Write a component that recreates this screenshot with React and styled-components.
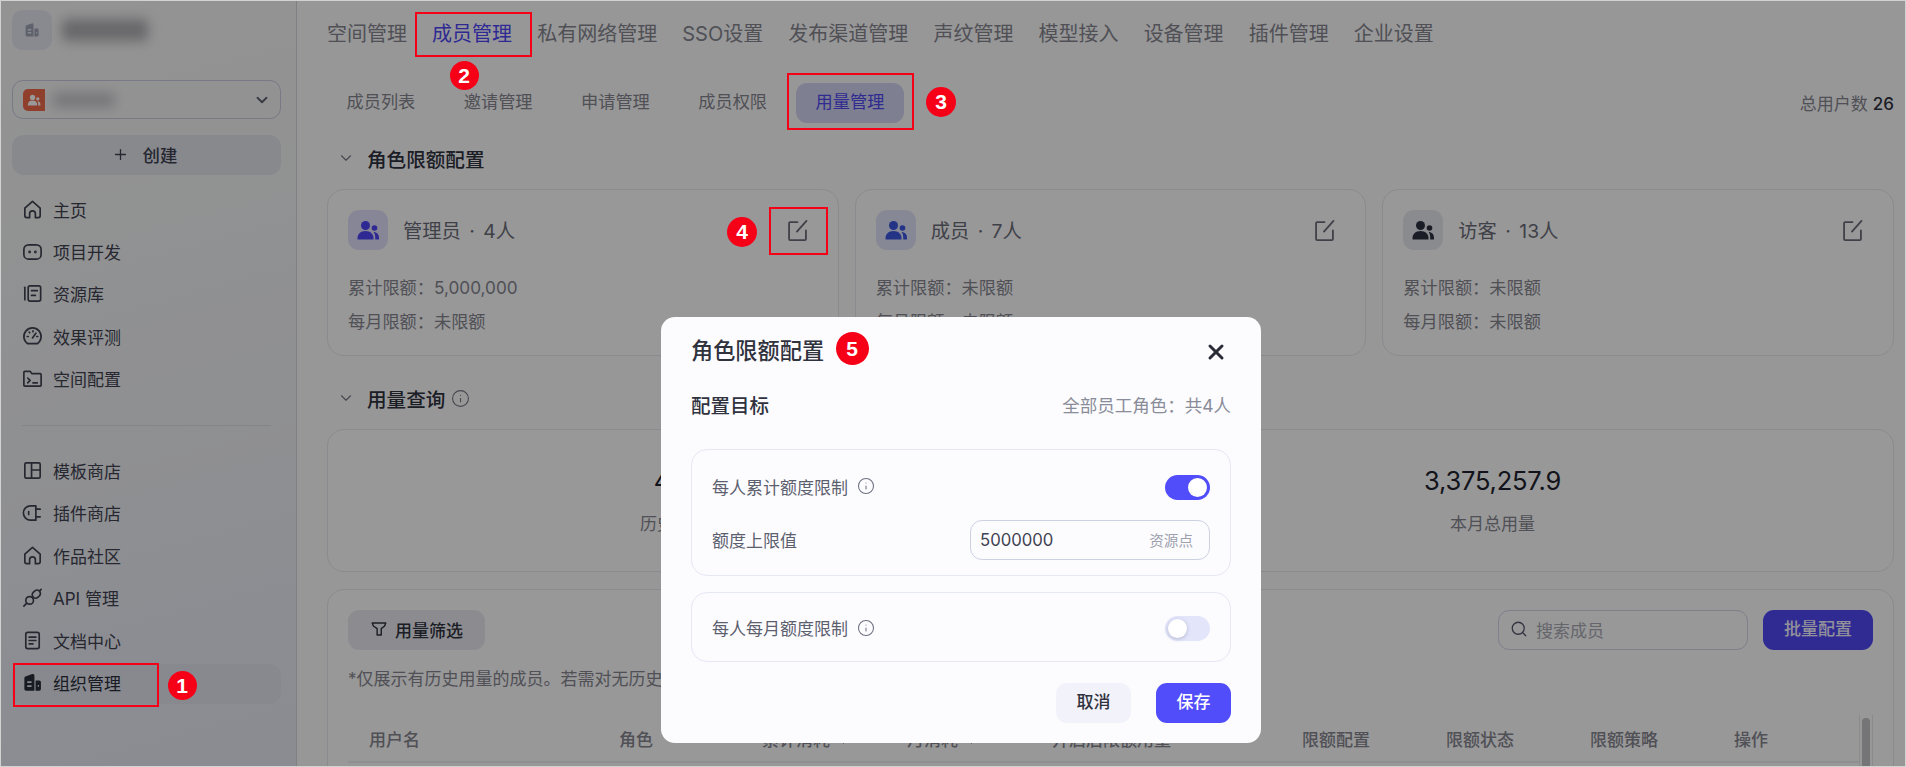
import React from "react";
import styled, { createGlobalStyle } from "styled-components";
import { ChevronDown, Info, Plus, Search, X } from "lucide-react";

const GlobalStyle = createGlobalStyle`
    html, body{
        margin: 0;
        padding: 0;
    }
    body{
        font-family: Inter, "Noto Sans CJK SC", sans-serif;
        color: #404250;
    }
    *{
        box-sizing: border-box;
    }
`;

const Frame = styled.div`
    position: relative;
    display: flex;
    width: 1906px;
    height: 767px;
    overflow: hidden;
    border: 1px solid #d2d2d2;
    background-color: #fcfcfd;
`;

/* sidebar */
const Sidebar = styled.aside`
    flex: 0 0 296px;
    padding: 9px 15px 0 11px;
    border-right: 1px solid #d5d6dc;
    background: linear-gradient(165deg, #f6f6f6 0%, #eff0f3 55%, #e6e9f4 100%);
`;

const OrgRow = styled.div`
    display: flex;
    align-items: center;
    gap: 10px;
    height: 40px;
`;

const LogoTile = styled.div`
    display: flex;
    align-items: center;
    justify-content: center;
    width: 40px;
    height: 40px;
    border-radius: 10px;
    background-color: #e4e6ee;
    color: #9ea3b5;
`;

const Blur = styled.div`
    width: ${p => p.$w}px;
    height: ${p => p.$h}px;
    border-radius: 4px;
    background-color: ${p => p.$c};
    filter: blur(6px);
`;

const WorkspaceSelect = styled.div`
    display: flex;
    align-items: center;
    height: 39px;
    margin-top: 30px;
    padding: 0 9px 0 10px;
    border: 1px solid #c8cade;
    border-radius: 11px;
    color: #5c5e70;
    > svg{
        margin-left: auto;
    }
`;

const WorkspaceIcon = styled.div`
    display: flex;
    align-items: center;
    justify-content: center;
    width: 22px;
    height: 22px;
    margin-right: 8px;
    border-radius: 5px 0 0 5px;
    background-color: #ee6a4a;
    color: #fff;
`;

const CreateButton = styled.button`
    display: flex;
    align-items: center;
    justify-content: center;
    gap: 14px;
    width: 100%;
    height: 40px;
    margin-top: 16px;
    padding: 0 4px 2px 0;
    border: none;
    border-radius: 12px;
    background-color: #e2e4ec;
    color: #404250;
    font: 500 17.4px Inter, "Noto Sans CJK SC", sans-serif;
`;

const NavList = styled.nav`
    display: flex;
    flex-direction: column;
    gap: 2.4px;
    margin-top: ${p => p.$top}px;
`;

const NavItem = styled.div`
    display: flex;
    align-items: center;
    gap: 9px;
    height: 40px;
    padding: 0 0 2px 9px;
    border-radius: 12px;
    font-size: 17px;
    background-color: ${p => p.$active ? "#e1e4ee" : "transparent"};
    color: ${p => p.$active ? "#2b2d3a" : "#404250"};
    svg{
        flex: none;
    }
`;

const NavDivider = styled.div`
    height: 1px;
    margin: 25px 10px 0 10px;
    background-color: #dcdee6;
`;

/* main column */
const Main = styled.main`
    flex: 1;
    min-width: 0;
    padding: 0 11px 0 30px;
`;

const TopTabs = styled.div`
    display: flex;
    align-items: center;
    gap: 25.1px;
    height: 65px;
    padding-bottom: 2px;
`;

const TopTab = styled.div`
    font-size: 20px;
    color: ${p => p.$active ? "#4f46f5" : "#85868f"};
`;

const SubBar = styled.div`
    display: flex;
    align-items: center;
    gap: 9.5px;
    height: 40px;
    margin-top: 17px;
`;

const SubTab = styled.div`
    padding: 0 19.5px 2px 19.5px;
    line-height: 38px;
    border-radius: 11px;
    font-size: 17.2px;
    background-color: ${p => p.$active ? "#d2d4f1" : "transparent"};
    color: ${p => p.$active ? "#5148f2" : "#85868f"};
`;

const UserTotal = styled.div`
    margin-left: auto;
    padding-bottom: 2px;
    font-size: 17px;
    color: #85868f;
    b{
        margin-left: 5px;
        font-weight: 500;
        color: #30323e;
    }
`;

const SectionHead = styled.div`
    display: flex;
    align-items: center;
    height: 28px;
    margin-top: ${p => p.$top}px;
    margin-bottom: 16px;
    padding: 0 0 2px 10px;
    color: #30323e;
    font-size: 19.6px;
    font-weight: 500;
    > svg:first-child{
        margin-right: 12px;
        color: #777985;
    }
    > svg:last-child:not(:first-child){
        margin-left: 6px;
        color: #777985;
    }
`;

const RoleGrid = styled.div`
    display: grid;
    grid-template-columns: repeat(3, 1fr);
    gap: 16px;
`;

const Card = styled.div`
    border: 1px solid #e7e8ee;
    border-radius: 17px;
    background-color: #fdfdfe;
`;

const RoleCard = styled(Card)`
    height: 167px;
    padding: 20px 20px 0 20px;
`;

const RoleHead = styled.div`
    display: flex;
    align-items: center;
    gap: 15px;
    height: 40px;
    color: #6b6c78;
    font-size: 19.3px;
    word-spacing: 3px;
    > svg{
        margin-left: auto;
        margin-right: 7px;
        color: #6b6c78;
    }
`;

const RoleTile = styled.div`
    display: flex;
    align-items: center;
    justify-content: center;
    width: 40px;
    height: 40px;
    border-radius: 11px;
    background-color: ${p => p.$guest ? "#e7e8ee" : p.$blue ? "#dfe3f9" : "#dfe0fa"};
    color: ${p => p.$guest ? "#2c3040" : p.$blue ? "#3b55e0" : "#4f46f5"};
`;

const RoleLines = styled.div`
    margin-top: 21px;
    color: #85868f;
    font-size: 17.2px;
    line-height: 34px;
`;

const SummaryCard = styled(Card)`
    display: grid;
    grid-template-columns: repeat(3, 405px);
    align-content: center;
    height: 143px;
    padding-left: 152px;
`;

const Summary = styled.div`
    text-align: center;
`;

const SummaryValue = styled.div`
    color: #20222e;
    font-size: 25.5px;
    font-weight: 400;
    line-height: 30px;
    letter-spacing: -0.2px;
`;

const SummaryLabel = styled.div`
    margin-top: 16px;
    color: #85868f;
    font-size: 17px;
    line-height: 24px;
`;

const TableCard = styled(Card)`
    height: 300px;
    margin-top: 17px;
    padding: 20px 20px 0 20px;
`;

const FilterBar = styled.div`
    display: flex;
    align-items: center;
    height: 40px;
`;

const FilterButton = styled.div`
    display: flex;
    align-items: center;
    gap: 7px;
    height: 40px;
    padding: 0 22px 2px 22px;
    border-radius: 11px;
    background-color: #e9eaf0;
    color: #30323e;
    font-size: 17px;
    font-weight: 500;
`;

const SearchBox = styled.div`
    display: flex;
    align-items: center;
    gap: 8px;
    width: 250px;
    height: 40px;
    margin-left: auto;
    padding: 0 11px 2px 11px;
    border: 1px solid #d3d5e6;
    border-radius: 11px;
    color: #a8a9b4;
    font-size: 17px;
    svg{
        color: #55576a;
    }
`;

const BatchButton = styled.div`
    width: 110px;
    height: 40px;
    margin-left: 15px;
    border-radius: 11px;
    background-color: #5047f6;
    color: #f4f3ff;
    font-size: 17px;
    font-weight: 500;
    line-height: 38px;
    text-align: center;
`;

const FilterNote = styled.div`
    margin-top: 17px;
    color: #85868f;
    font-size: 17px;
    line-height: 24px;
    white-space: nowrap;
`;

const TableWrap = styled.div`
    display: flex;
    height: 80px;
    margin-top: 24px;
`;

const TableHead = styled.div`
    flex: 1;
    display: grid;
    grid-template-columns: 250px 143px 145px 145px 250px 144px 144px 144px 1fr;
    align-items: center;
    height: 48px;
    padding-left: 21px;
    border-bottom: 2px solid #eeeff3;
    color: #85868f;
    font-size: 17px;
    font-weight: 500;
`;

const HeadCell = styled.div`
    display: flex;
    align-items: center;
    gap: 9px;
`;

const ScrollTrack = styled.div`
    flex: 0 0 14px;
    padding: 3px 2px;
    border-left: 1px solid #e8e8ea;
    border-right: 1px solid #e8e8ea;
`;

const ScrollThumb = styled.div`
    height: 80px;
    border-radius: 4px;
    background-color: #c4c4c6;
`;

/* overlay and dialog */
const Overlay = styled.div`
    position: absolute;
    inset: 0;
    background-color: rgba(0, 0, 0, 0.4);
`;

const Modal = styled.section`
    position: absolute;
    left: 660px;
    top: 316px;
    width: 600px;
    height: 426px;
    padding: 20px 30px 0 30px;
    border-radius: 14px;
    background-color: #fcfcff;
`;

const ModalHead = styled.div`
    display: flex;
    align-items: center;
    justify-content: space-between;
    height: 28px;
    color: #30323e;
    font-size: 22.2px;
    font-weight: 500;
    line-height: 28px;
    svg{
        margin-right: 3px;
        margin-top: 2px;
        color: #2a2c38;
    }
`;

const TargetRow = styled.div`
    display: flex;
    align-items: center;
    justify-content: space-between;
    height: 28px;
    margin-top: 25px;
    color: #30323e;
    font-size: 19.5px;
    font-weight: 500;
    span{
        color: #8a8c99;
        font-size: 17.5px;
        font-weight: 400;
    }
`;

const LimitPanel = styled.div`
    margin-top: ${p => p.$top}px;
    padding: 4px 20px ${p => p.$bottom}px 20px;
    border: 1px solid #e6e8f3;
    border-radius: 16px;
`;

const LimitRow = styled.div`
    display: flex;
    align-items: center;
    justify-content: space-between;
    height: ${p => p.$h}px;
    color: #5c5f6e;
    font-size: 17px;
`;

const LimitLabel = styled.div`
    display: flex;
    align-items: center;
    gap: 9px;
    padding-bottom: 2px;
    svg{
        color: #6d7080;
    }
`;

const Switch = styled.div`
    display: flex;
    align-items: center;
    justify-content: ${p => p.$on ? "flex-end" : "flex-start"};
    width: 45px;
    height: 25px;
    padding: 0 3px;
    border-radius: 13px;
    background-color: ${p => p.$on ? "#524dfb" : "#e3e6fb"};
    i{
        width: 19px;
        height: 19px;
        border-radius: 50%;
        background-color: #fff;
        box-shadow: ${p => p.$on ? "none" : "0 1px 4px rgba(60, 64, 100, 0.3)"};
    }
`;

const QuotaInput = styled.div`
    display: flex;
    align-items: center;
    justify-content: space-between;
    width: 240px;
    height: 40px;
    padding: 0 16px 0 9px;
    border: 1px solid #cdd1e2;
    border-radius: 12px;
    color: #3f4250;
    font-size: 16.7px;
    span{
        padding-bottom: 2px;
        color: #9da0ad;
        font-size: 14.6px;
    }
`;

const ModalFooter = styled.div`
    display: flex;
    justify-content: flex-end;
    gap: 25px;
    margin-top: 21px;
`;

const ModalButton = styled.div`
    width: 75px;
    height: 40px;
    border-radius: 11px;
    background-color: ${p => p.$primary ? "#524dfb" : "#f2f3fa"};
    color: ${p => p.$primary ? "#fff" : "#30323e"};
    font-size: 17px;
    font-weight: 500;
    line-height: 38px;
    text-align: center;
`;

/* red tutorial marks lying over the page */
const MarkBox = styled.div`
    position: absolute;
    left: ${p => p.$x}px;
    top: ${p => p.$y}px;
    width: ${p => p.$w}px;
    height: ${p => p.$h}px;
    border: 2px solid #f60018;
`;

const MarkBadge = styled.div`
    position: absolute;
    left: ${p => p.$x - p.$d / 2}px;
    top: ${p => p.$y - p.$d / 2}px;
    width: ${p => p.$d}px;
    height: ${p => p.$d}px;
    border-radius: 50%;
    background-color: #f60018;
    color: #fff;
    font: 700 21px/${p => p.$d}px "Liberation Sans", Arial, sans-serif;
    text-align: center;
`;

const Line = ({ size = 23, sw = 1.75, children }) => (
    <svg width={size} height={size} viewBox="0 0 24 24" fill="none" stroke="currentColor" strokeWidth={sw} strokeLinecap="round" strokeLinejoin="round">
        {children}
    </svg>
);

const HomeIcon = () => <Line><path d="M4 10.5 12 3.5l8 7V18.5a2 2 0 0 1-2 2h-3v-4a3 3 0 0 0-6 0v4H6a2 2 0 0 1-2-2z" /></Line>;
const BotIcon = () => <Line><rect x="3" y="5" width="18" height="15" rx="5" /><circle cx="9" cy="12.5" r="0.6" /><circle cx="15" cy="12.5" r="0.6" /></Line>;
const LibraryIcon = () => <Line><path d="M4 5.5v13" /><rect x="7.5" y="4" width="13" height="16" rx="2" /><path d="M11 9h6M11 14h4" /></Line>;
const GaugeIcon = () => <Line><path d="M7 19.500a9 9 0 1 1 10 0z" /><path d="m12 13.500 3.500-5M6.500 12h1M8.500 7.500l.6.6M12.500 6v1M16.500 12h1" /></Line>;
const ConsoleIcon = () => <Line><path d="M3 5.500a1 1 0 0 1 1-1h5.500l2 2.500H20a1 1 0 0 1 1 1v11a1 1 0 0 1-1 1H4a1 1 0 0 1-1-1z" /><path d="m7 11.500 2.500 2.500L7 16.500M12.500 16.500H17" /></Line>;
const TemplateIcon = () => <Line><rect x="4" y="4" width="16" height="16" rx="1.500" /><path d="M11 4v16M11 11.500h9" /></Line>;
const PlugIcon = () => <Line><path d="M15.500 5H10a7.500 7.500 0 0 0 0 15h5.500z" /><path d="M15.500 8.500H20M15.500 16.500H20M8 11v3" /></Line>;
const ApiIcon = () => <Line><circle cx="9" cy="15" r="4" /><rect x="11.500" y="5" width="9" height="7" rx="3.500" transform="rotate(-40 16 8.500)" /><path d="m3 21 3-3.200M19.500 5 21 3.500" /></Line>;
const DocIcon = () => <Line><rect x="5" y="3.500" width="14" height="17" rx="2" /><path d="M8.500 8.500h7M8.500 12h7M8.500 15.500h4" /></Line>;

const BuildingIcon = ({ size = 23 }) => (
    <svg width={size} height={size} viewBox="0 0 24 24" fill="currentColor">
        <path fillRule="evenodd" d="M3.500 7.500a1.800 1.800 0 0 1 1.200-1.700l7-2.600a1.800 1.800 0 0 1 2.300 1.700V20.500H5.300a1.800 1.800 0 0 1-1.800-1.800zM6.500 10.800v1.800h4.500v-1.800zm0 4v1.800h4.500v-1.800z" />
        <path fillRule="evenodd" d="M15.200 10H19a1.800 1.800 0 0 1 1.800 1.800v6.900a1.800 1.800 0 0 1-1.800 1.800h-3.800zm2.300 4.600v1.800h1.300v-1.800z" />
    </svg>
);

const UsersIcon = ({ size = 24 }) => (
    <svg width={size} height={size} viewBox="0 0 24 24" fill="currentColor">
        <circle cx="9.500" cy="7.500" r="4.500" />
        <path d="M1.500 20c0-4.200 3.400-7 8-7s8 2.800 8 7v1.500h-16z" />
        <circle cx="18.500" cy="10" r="2.800" />
        <path d="M18.500 14c2.600.4 4.500 2.700 4.500 5.500v2h-3.800V20c0-2.400-.3-4.300-1.500-5.800z" />
    </svg>
);

const EditIcon = () => (
    <Line size={27} sw={1.6}>
        <path d="M12 4.500H5.500a1 1 0 0 0-1 1v14a1 1 0 0 0 1 1H18.500a1 1 0 0 0 1-1V12" />
        <path d="m20 3.500-8.500 9.500" />
    </Line>
);

const FunnelIcon = () => (
    <Line size={18} sw={1.9}>
        <path d="M3 4h18l-1.500 4-4.500 3.500V20h-5.500v-8.500L4.500 8z" />
    </Line>
);

const SortIcon = () => (
    <svg width="9" height="12" viewBox="0 0 9 12" fill="#85868f">
        <path d="M4.500 0 8 5H1zM4.500 12 1 7h7z" />
    </svg>
);

const topTabs = ["空间管理", "成员管理", "私有网络管理", "SSO设置", "发布渠道管理", "声纹管理", "模型接入", "设备管理", "插件管理", "企业设置"];
const subTabs = ["成员列表", "邀请管理", "申请管理", "成员权限", "用量管理"];

const navTop = [
    [HomeIcon, "主页"],
    [BotIcon, "项目开发"],
    [LibraryIcon, "资源库"],
    [GaugeIcon, "效果评测"],
    [ConsoleIcon, "空间配置"],
];

const navBottom = [
    [TemplateIcon, "模板商店"],
    [PlugIcon, "插件商店"],
    [HomeIcon, "作品社区"],
    [ApiIcon, "API 管理"],
    [DocIcon, "文档中心"],
    [BuildingIcon, "组织管理"],
];

const roles = [
    { name: "管理员 · 4人", total: "5,000,000", month: "未限额" },
    { name: "成员 · 7人", total: "未限额", month: "未限额", blue: true },
    { name: "访客 · 13人", total: "未限额", month: "未限额", guest: true },
];

const summaries = [
    ["4218", "历史总用量"],
    ["3,375,257.9", "上月总用量"],
    ["3,375,257.9", "本月总用量"],
];

const columns = ["用户名", "角色", "累计消耗", "月消耗", "开启后限额用量", "限额配置", "限额状态", "限额策略", "操作"];

const marks = [
    { x: 12, y: 662, w: 146, h: 44 },
    { x: 414, y: 11, w: 117, h: 45 },
    { x: 786, y: 72, w: 127, h: 57 },
    { x: 768, y: 206, w: 59, h: 48 },
];

const badges = [
    { n: 1, x: 181, y: 684, d: 29 },
    { n: 2, x: 463, y: 74, d: 29 },
    { n: 3, x: 940, y: 101, d: 30 },
    { n: 4, x: 741, y: 231, d: 30 },
    { n: 5, x: 851, y: 347, d: 33 },
];

function App(){
    return(
        <Frame>
            <GlobalStyle />
            <Sidebar>
                <OrgRow>
                    <LogoTile><BuildingIcon size={18} /></LogoTile>
                    <Blur $w={86} $h={22} $c="#aeaeb2" />
                </OrgRow>
                <WorkspaceSelect>
                    <WorkspaceIcon><UsersIcon size={14} /></WorkspaceIcon>
                    <Blur $w={62} $h={14} $c="#c4c4c8" />
                    <ChevronDown size={18} strokeWidth={2.4} />
                </WorkspaceSelect>
                <CreateButton><Plus size={17} strokeWidth={1.8} />创建</CreateButton>
                <NavList $top={15}>
                    {navTop.map(([Icon, label]) => (
                        <NavItem key={label}><Icon />{label}</NavItem>
                    ))}
                </NavList>
                <NavDivider />
                <NavList $top={26}>
                    {navBottom.map(([Icon, label]) => (
                        <NavItem key={label} $active={label === "组织管理"}><Icon />{label}</NavItem>
                    ))}
                </NavList>
            </Sidebar>

            <Main>
                <TopTabs>
                    {topTabs.map(t => <TopTab key={t} $active={t === "成员管理"}>{t}</TopTab>)}
                </TopTabs>
                <SubBar>
                    {subTabs.map(t => <SubTab key={t} $active={t === "用量管理"}>{t}</SubTab>)}
                    <UserTotal>总用户数<b>26</b></UserTotal>
                </SubBar>

                <SectionHead $top={22}><ChevronDown size={18} strokeWidth={1.5} />角色限额配置</SectionHead>
                <RoleGrid>
                    {roles.map(r => (
                        <RoleCard key={r.name}>
                            <RoleHead>
                                <RoleTile $blue={r.blue} $guest={r.guest}><UsersIcon /></RoleTile>
                                {r.name}
                                <EditIcon />
                            </RoleHead>
                            <RoleLines>
                                <div>累计限额：{r.total}</div>
                                <div>每月限额：{r.month}</div>
                            </RoleLines>
                        </RoleCard>
                    ))}
                </RoleGrid>

                <SectionHead $top={29}>
                    <ChevronDown size={18} strokeWidth={1.5} />用量查询<Info size={19} strokeWidth={1.4} />
                </SectionHead>
                <SummaryCard>
                    {summaries.map(([value, label]) => (
                        <Summary key={label}>
                            <SummaryValue>{value}</SummaryValue>
                            <SummaryLabel>{label}</SummaryLabel>
                        </Summary>
                    ))}
                </SummaryCard>

                <TableCard>
                    <FilterBar>
                        <FilterButton><FunnelIcon />用量筛选</FilterButton>
                        <SearchBox><Search size={18} strokeWidth={1.7} />搜索成员</SearchBox>
                        <BatchButton>批量配置</BatchButton>
                    </FilterBar>
                    <FilterNote>*仅展示有历史用量的成员。若需对无历史用量的成员配置限额，请前往角色限额配置。</FilterNote>
                    <TableWrap>
                        <TableHead>
                            {columns.map(c => (
                                <HeadCell key={c}>
                                    {c}
                                    {(c === "累计消耗" || c === "月消耗") && <SortIcon />}
                                </HeadCell>
                            ))}
                        </TableHead>
                        <ScrollTrack><ScrollThumb /></ScrollTrack>
                    </TableWrap>
                </TableCard>
            </Main>

            <Overlay />

            <Modal>
                <ModalHead>角色限额配置<X size={24} strokeWidth={3} /></ModalHead>
                <TargetRow>配置目标<span>全部员工角色：共4人</span></TargetRow>
                <LimitPanel $top={31} $bottom={15}>
                    <LimitRow $h={66}>
                        <LimitLabel>每人累计额度限制<Info size={18} strokeWidth={1.4} /></LimitLabel>
                        <Switch $on><i /></Switch>
                    </LimitRow>
                    <LimitRow $h={40}>
                        <LimitLabel>额度上限值</LimitLabel>
                        <QuotaInput>5000000<span>资源点</span></QuotaInput>
                    </LimitRow>
                </LimitPanel>
                <LimitPanel $top={16} $bottom={1}>
                    <LimitRow $h={63}>
                        <LimitLabel>每人每月额度限制<Info size={18} strokeWidth={1.4} /></LimitLabel>
                        <Switch><i /></Switch>
                    </LimitRow>
                </LimitPanel>
                <ModalFooter>
                    <ModalButton>取消</ModalButton>
                    <ModalButton $primary>保存</ModalButton>
                </ModalFooter>
            </Modal>

            {marks.map(m => <MarkBox key={m.x} $x={m.x} $y={m.y} $w={m.w} $h={m.h} />)}
            {badges.map(b => <MarkBadge key={b.n} $x={b.x} $y={b.y} $d={b.d}>{b.n}</MarkBadge>)}
        </Frame>
    );
}

export default App
